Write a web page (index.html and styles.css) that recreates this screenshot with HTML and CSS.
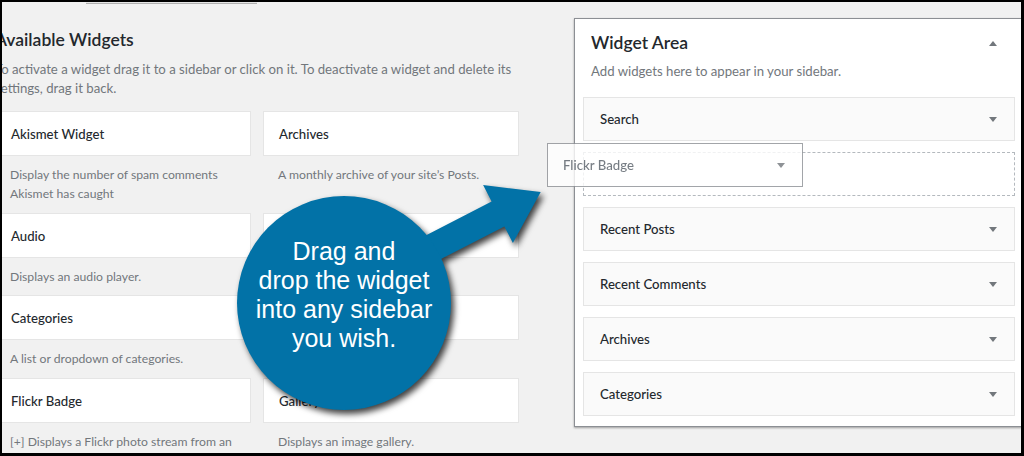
FILE: index.html
```html
<!DOCTYPE html>
<html lang="en">
<head>
<meta charset="utf-8">
<title>Widgets</title>
<link rel="stylesheet" href="styles.css">
</head>
<body>
<div class="frame">
  <div class="topbar"><span class="top-btn"></span></div>
  <div class="columns">
    <section class="available">
      <h2 class="section-title">Available Widgets</h2>
      <p class="intro">To activate a widget drag it to a sidebar or click on it. To deactivate a widget and delete its settings, drag it back.</p>
      <div class="widget-grid">
        <div class="widget"><div class="widget-top">Akismet Widget</div><div class="widget-desc">Display the number of spam comments Akismet has caught</div></div>
        <div class="widget"><div class="widget-top">Archives</div><div class="widget-desc">A monthly archive of your site’s Posts.</div></div>
        <div class="widget"><div class="widget-top">Audio</div><div class="widget-desc">Displays an audio player.</div></div>
        <div class="widget"><div class="widget-top">Calendar</div><div class="widget-desc">A calendar of your site’s Posts.</div></div>
        <div class="widget"><div class="widget-top">Categories</div><div class="widget-desc">A list or dropdown of categories.</div></div>
        <div class="widget"><div class="widget-top">Custom HTML</div><div class="widget-desc">Arbitrary HTML code.</div></div>
        <div class="widget"><div class="widget-top">Flickr Badge</div><div class="widget-desc">[+] Displays a Flickr photo stream from an account.</div></div>
        <div class="widget"><div class="widget-top">Gallery</div><div class="widget-desc">Displays an image gallery.</div></div>
      </div>
    </section>
    <section class="area">
      <div class="area-head">
        <h3 class="area-title">Widget Area</h3>
        <span class="tri tri-up"></span>
      </div>
      <p class="area-desc">Add widgets here to appear in your sidebar.</p>
      <div class="area-list">
        <div class="sb-widget"><span>Search</span><span class="tri tri-down"></span></div>
        <div class="sb-placeholder"></div>
        <div class="sb-widget"><span>Recent Posts</span><span class="tri tri-down"></span></div>
        <div class="sb-widget"><span>Recent Comments</span><span class="tri tri-down"></span></div>
        <div class="sb-widget"><span>Archives</span><span class="tri tri-down"></span></div>
        <div class="sb-widget"><span>Categories</span><span class="tri tri-down"></span></div>
      </div>
    </section>
  </div>

  <div class="helper"><span>Flickr Badge</span><span class="tri tri-down"></span></div>

  <svg class="callout-shape" viewBox="0 0 1024 456" xmlns="http://www.w3.org/2000/svg" aria-hidden="true">
    <polygon points="411.6,242.7 491.6,201.6 483.1,185.1 540.7,192.1 512.9,242.9 504.4,226.4 424.4,267.5" fill="#0272a7"/>
    <circle cx="344" cy="303" r="107" fill="#0272a7"/>
  </svg>
  <div class="callout-text">Drag and<br>drop the widget<br>into any sidebar<br>you wish.</div>
</div>
</body>
</html>
```

FILE: styles.css
```css
html, body {
  margin: 0;
  padding: 0;
}
body {
  width: 1024px;
  height: 456px;
  overflow: hidden;
  background: #000;
}
.frame {
  position: relative;
  box-sizing: border-box;
  width: 1024px;
  height: 456px;
  border-style: solid;
  border-color: #000;
  border-width: 2px 3px 3px 2px;
  background: #f1f1f1;
  overflow: hidden;
  font-family: Lato, "Open Sans", sans-serif;
  color: #23282d;
}
.topbar {
  height: 2px;
  display: flex;
}
.top-btn {
  margin-left: 84px;
  width: 171px;
  height: 1px;
  background: #e6e6e6;
  border-bottom: 1px solid #b0b0b0;
}
.columns {
  display: flex;
  align-items: flex-start;
}
.available {
  flex: none;
  width: 523px;
  margin-left: -7px;
}
.section-title {
  margin: 24px 0 0;
  font-size: 17.5px;
  line-height: 24px;
  font-weight: 600;
}
.intro {
  margin: 8px 0 0;
  font-size: 13.2px;
  line-height: 19px;
  color: #72777c;
}
.widget-grid {
  margin-top: 13px;
  display: grid;
  grid-template-columns: 256px 256px;
  column-gap: 12px;
}
.widget-top {
  box-sizing: border-box;
  height: 45px;
  display: flex;
  align-items: center;
  padding: 0 15px;
  background: #fff;
  border: 1px solid #e5e5e5;
  font-size: 13.2px;
  font-weight: 500;
}
.widget-desc {
  padding: 9px 15px 10px;
  font-size: 12.2px;
  line-height: 19px;
  color: #72777c;
}
.widget:nth-child(3) .widget-desc,
.widget:nth-child(4) .widget-desc {
  padding-bottom: 9px;
}
.area {
  flex: none;
  box-sizing: border-box;
  width: 450px;
  margin: 14px 0 0 56px;
  padding: 12px 8px 10px;
  background: #fff;
  border: 1px solid #8c8f94;
  box-shadow: 0 1px 2px rgba(0, 0, 0, .35);
}
.area-head {
  display: flex;
  align-items: center;
  justify-content: space-between;
  padding: 0 18px 0 8px;
}
.area-title {
  margin: 0;
  font-size: 17.5px;
  line-height: 24px;
  font-weight: 600;
}
.area-desc {
  margin: 7px 8px 16px;
  font-size: 13.2px;
  line-height: 19px;
  color: #72777c;
}
.area-list {
  display: flex;
  flex-direction: column;
  gap: 11px;
}
.sb-widget {
  box-sizing: border-box;
  height: 44px;
  display: flex;
  align-items: center;
  justify-content: space-between;
  padding: 0 17px 0 16px;
  background: #fafafa;
  border: 1px solid #e5e5e5;
  font-size: 13.2px;
  font-weight: 500;
}
.sb-placeholder {
  box-sizing: border-box;
  height: 44px;
  border: 1px dashed #b4b9be;
}
.tri {
  width: 0;
  height: 0;
  border-left: 4px solid transparent;
  border-right: 4px solid transparent;
}
.tri-down {
  border-top: 5px solid #72777c;
}
.tri-up {
  border-bottom: 5px solid #72777c;
}
.helper {
  position: absolute;
  left: 545px;
  top: 141px;
  box-sizing: border-box;
  width: 256px;
  height: 44px;
  display: flex;
  align-items: center;
  justify-content: space-between;
  padding: 0 17px 0 15px;
  background: #fff;
  border: 1px solid #8c8f94;
  opacity: .8;
  font-size: 13.2px;
  font-weight: 500;
  color: #555d66;
}
.callout-shape {
  position: absolute;
  left: -2px;
  top: -2px;
  width: 1024px;
  height: 456px;
  filter: drop-shadow(3px 4px 3px rgba(0, 0, 0, .75));
}
.callout-text {
  position: absolute;
  left: 235px;
  top: 194px;
  box-sizing: border-box;
  width: 214px;
  height: 214px;
  padding-bottom: 16px;
  display: flex;
  flex-direction: column;
  justify-content: center;
  align-items: center;
  text-align: center;
  font-family: "Liberation Sans", Arial, sans-serif;
  font-size: 25px;
  line-height: 29px;
  color: #fff;
}
```
